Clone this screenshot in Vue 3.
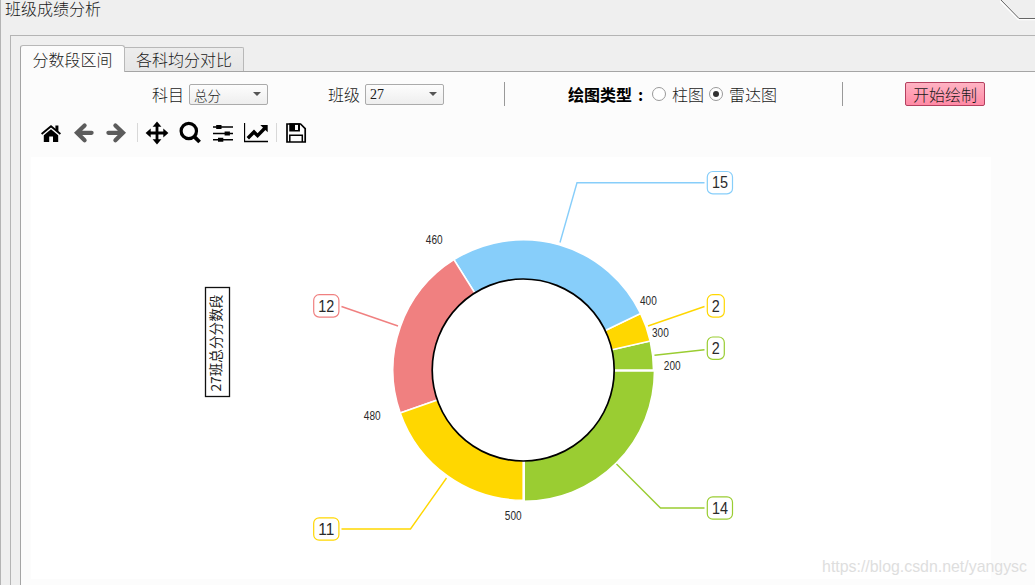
<template>
  <div class="window">
    <svg class="corner" width="35" height="22" viewBox="0 0 35 22">
      <path d="M0 1 L18.5 19.5 H35" stroke="#fff" stroke-width="1.5" fill="none" />
      <path d="M1 0 L19 18.5 H35" stroke="#666" fill="none" />
    </svg>
    <div class="title">班级成绩分析</div>

    <div class="group">
      <div class="tabs">
        <button
          v-for="(tab, i) in tabs"
          :key="tab"
          class="tab"
          :class="{ active: activeTab === i }"
          @click="activeTab = i"
        >{{ tab }}</button>
      </div>

      <div class="pane">
        <div class="controls">
          <label class="subject">科目</label>
          <div class="select zh"><span>总分</span><i class="arrow"></i></div>
          <label class="class-label">班级</label>
          <div class="select"><span>27</span><i class="arrow"></i></div>
          <div class="sep sep-first"></div>
          <strong class="type-label">绘图类型<span class="colon">:</span></strong>
          <span class="radio" @click="chartType = 'bar'"><i :class="{ checked: chartType === 'bar' }"></i>柱图</span>
          <span class="radio" @click="chartType = 'radar'"><i :class="{ checked: chartType === 'radar' }"></i>雷达图</span>
          <div class="sep sep-second"></div>
          <button class="draw">开始绘制</button>
        </div>

        <div class="toolbar">
          <!-- home -->
          <svg width="24" height="24" viewBox="0 0 24 24">
            <path d="M4.8 14.2 L12 8.3 L19.2 14.2 V21 H14 V15.6 H10.2 V21 H4.8 Z" fill="#000" />
            <path d="M2.6 13 L12 5.2 L21.4 13" fill="none" stroke="#000" stroke-width="1.9" />
            <path d="M16.4 4.6 H19.4 V11.4 L16.4 9 Z" fill="#000" />
          </svg>
          <!-- back -->
          <svg class="back" width="24" height="24" viewBox="0 0 24 24">
            <path d="M19.6 11.8 H6 M12.6 4.4 L5 11.8 L12.6 19.2" fill="none" stroke="#5c5c5c" stroke-width="4.2" stroke-linecap="round" />
          </svg>
          <!-- forward -->
          <svg class="forward" width="24" height="24" viewBox="0 0 24 24">
            <path d="M3.4 11.8 H17 M10.4 4.4 L18 11.8 L10.4 19.2" fill="none" stroke="#5c5c5c" stroke-width="4.2" stroke-linecap="round" />
          </svg>
          <i class="bar bar-first"></i>
          <!-- pan -->
          <svg class="pan" width="24" height="24" viewBox="0 0 24 24">
            <path d="M12 4 V20 M4 12 H20" stroke="#000" stroke-width="2.8" />
            <path d="M12 .6 L16.4 5.7 H7.6 Z M12 23.4 L16.4 18.3 H7.6 Z M.6 12 L5.7 7.6 V16.4 Z M23.4 12 L18.3 7.6 V16.4 Z" fill="#000" />
          </svg>
          <!-- zoom -->
          <svg class="zoom" width="24" height="24" viewBox="0 0 24 24">
            <circle cx="10.8" cy="10" r="7.7" fill="none" stroke="#000" stroke-width="3.2" />
            <path d="M16 15.4 L21.6 21" stroke="#000" stroke-width="3.8" />
          </svg>
          <!-- subplots -->
          <svg class="subplots" width="24" height="24" viewBox="0 0 24 24">
            <path d="M2 6 H22 M2 12.5 H22 M2 18.8 H22" stroke="#000" stroke-width="1.4" />
            <path d="M5.2 4 H10.5 V8 H5.2 Z M13.6 10.5 H18.9 V14.5 H13.6 Z M7 16.8 H12.3 V20.8 H7 Z" fill="#000" />
          </svg>
          <!-- axes -->
          <svg class="axes" width="24" height="24" viewBox="0 0 24 24">
            <path d="M.5 2 V20.5 H24" fill="none" stroke="#000" stroke-width="1.3" />
            <path d="M3.8 17.3 L10 11 L13.6 14.6 L21 7" fill="none" stroke="#000" stroke-width="3.4" />
            <path d="M16.3 4 H23.7 V11.3 Z" fill="#000" />
          </svg>
          <i class="bar bar-second"></i>
          <!-- save -->
          <svg class="save" width="24" height="24" viewBox="0 0 24 24">
            <path d="M3 3 H16.6 L21.2 7.6 V21 H3 Z" fill="none" stroke="#000" stroke-width="1.7" />
            <path d="M6 3 H15.2 V9.8 H6 Z M5.8 21 V14.3 H18.3 V21" fill="none" stroke="#000" stroke-width="1.5" />
            <path d="M6 3 H11 V9 H6 Z M14 3 H15.8 V9 H14 Z" fill="#000" />
          </svg>
        </div>

        <svg class="chart" width="960" height="422" viewBox="31 157 960 422">
          <path
            v-for="(s, i) in slices"
            :key="'s' + i"
            :d="s.d"
            :fill="s.color"
            stroke="#fff"
            stroke-width="1.6"
          />
          <circle :cx="cx" :cy="cy" r="91" fill="#fff" stroke="#000" stroke-width="1.7" />

          <g v-for="(c, i) in callouts" :key="'c' + i">
            <polyline :points="c.line" fill="none" :stroke="c.color" stroke-width="1.4" />
            <rect :x="c.x" :y="c.y" :width="c.w" height="22.4" rx="5.5" fill="#fff" :stroke="c.color" stroke-width="1.2" />
            <text
              class="count"
              :x="c.x + c.w / 2"
              :y="c.y + 16.8"
              :textLength="c.text.length * 8"
              lengthAdjust="spacingAndGlyphs"
            >{{ c.text }}</text>
          </g>

          <text
            v-for="l in labels"
            :key="l.text"
            class="score"
            :x="l.x"
            :y="l.y"
            textLength="16.8"
            lengthAdjust="spacingAndGlyphs"
          >{{ l.text }}</text>

          <rect x="205.5" y="287.5" width="24" height="109" fill="#fff" stroke="#111" stroke-width="1.3" />
          <text
            class="y-label"
            transform="translate(221 391.5) rotate(-90)"
            textLength="97"
            lengthAdjust="spacingAndGlyphs"
          >27班总分分数段</text>
        </svg>
      </div>
    </div>

    <div class="watermark">https://blog.csdn.net/yangysc</div>
  </div>
</template>

<script setup>
import { ref } from 'vue';

const tabs = ['分数段区间', '各科均分对比'];
const activeTab = ref(0);
const chartType = ref('radar');

const cx = 523.2;
const cy = 370;
const radius = 130.3;

const green = '#9acd32';
const gold = '#ffd700';
const blue = '#87cefa';
const coral = '#f08080';

const data = [
  { value: 2, color: green },
  { value: 2, color: gold },
  { value: 15, color: blue },
  { value: 12, color: coral },
  { value: 11, color: gold },
  { value: 14, color: green, explode: 1.4 },
];

const total = data.reduce((sum, d) => sum + d.value, 0);
let angle = 0;
// counter-clockwise from the positive x axis
const slices = data.map((d) => {
  const start = angle;
  const end = angle + (d.value / total) * Math.PI * 2;
  angle = end;
  const mid = (start + end) / 2;
  const offset = d.explode || 0;
  const ox = cx + offset * Math.cos(mid);
  const oy = cy - offset * Math.sin(mid);
  const point = (a) => `${ox + radius * Math.cos(a)} ${oy - radius * Math.sin(a)}`;
  return {
    color: d.color,
    d: `M${ox} ${oy} L${point(start)} A${radius} ${radius} 0 0 0 ${point(end)} Z`,
  };
});

const callouts = [
  { text: '15', color: blue, x: 707.3, y: 171.5, w: 25.2, line: '560,242.5 577,182.7 704.5,182.7' },
  { text: '2', color: gold, x: 707.3, y: 294.7, w: 17, line: '648,326 704.5,306.5' },
  { text: '2', color: green, x: 707.3, y: 337, w: 17, line: '654.5,355.2 704.5,349.7' },
  { text: '14', color: green, x: 707.3, y: 496.8, w: 25.2, line: '616.5,464 660.5,508 704.5,508' },
  { text: '11', color: gold, x: 313.7, y: 517.8, w: 25.2, line: '446.5,478 410.5,529 341.5,529' },
  { text: '12', color: coral, x: 313.7, y: 294.7, w: 25.2, line: '398,326 341.5,306.5' },
];

const labels = [
  { text: '460', x: 425.8, y: 244 },
  { text: '400', x: 640, y: 305 },
  { text: '300', x: 652, y: 337 },
  { text: '200', x: 663.8, y: 370 },
  { text: '480', x: 363.8, y: 420 },
  { text: '500', x: 504.8, y: 520 },
];
</script>

<style>
body {
  margin: 0;
  overflow: hidden;
}
</style>

<style scoped>
.window {
  position: relative;
  display: flex;
  flex-direction: column;
  box-sizing: border-box;
  width: 1035px;
  height: 585px;
  overflow: hidden;
  background: #efefef;
  border-left: 1px solid #b4b4b4;
  color: #1a1a1a;
  font-family: "Noto Sans CJK SC", sans-serif;
  font-weight: 300;
  font-size: 16px;
}

.corner {
  position: absolute;
  top: 0;
  right: 0;
}

.title {
  flex: none;
  height: 35px;
  padding-left: 4px;
  line-height: 17px;
}

.group {
  flex: 1;
  min-height: 0;
  margin-left: 9px;
  padding: 9px 0 0 9px;
  border-top: 1px solid #b4b4b4;
  border-left: 1px solid #b4b4b4;
}

.tabs {
  display: flex;
  align-items: flex-end;
  height: 26px;
}

.tab {
  box-sizing: border-box;
  height: 24px;
  padding: 0 11px;
  border: 1px solid #b8b8b8;
  border-left: none;
  border-bottom: none;
  border-radius: 0 2px 0 0;
  background: linear-gradient(#ededed, #e6e6e6);
  color: inherit;
  font: inherit;
  line-height: 23px;
}

.tab.active {
  position: relative;
  height: 27px;
  margin-bottom: -1px;
  width: 105px;
  border-left: 1px solid #a5a5a5;
  border-radius: 3px 3px 0 0;
  background: #fcfcfc;
  line-height: 25px;
}

.pane {
  height: 520px;
  border-top: 1px solid #a5a5a5;
  border-left: 1px solid #a5a5a5;
  background: #fcfcfc;
}

.controls {
  display: flex;
  align-items: center;
  height: 44px;
  padding-left: 131px;
}

.subject {
  margin-right: 5px;
}

.class-label {
  margin-left: 60px;
  margin-right: 5px;
}

.select {
  display: flex;
  align-items: center;
  justify-content: space-between;
  box-sizing: border-box;
  width: 79px;
  height: 21px;
  padding: 1px 6px 0 4px;
  border: 1px solid #ababab;
  border-radius: 2px;
  background: linear-gradient(#fdfdfd, #eee);
  font-family: "Liberation Serif", serif;
  font-size: 14px;
}

.select.zh {
  font-family: "Noto Sans CJK SC", sans-serif;
  font-size: 13.5px;
}

.arrow {
  margin-bottom: 1px;
  border: 4px solid transparent;
  border-top: 4px solid #555;
  border-bottom: none;
}

.sep {
  width: 1px;
  height: 24px;
  background: #999;
}

.sep-first {
  margin-left: 60px;
  margin-right: 63px;
}

.sep-second {
  margin-left: 65px;
  margin-right: 62px;
}

.type-label {
  width: 84px;
  color: #000;
  font-weight: 700;
  white-space: nowrap;
}

.colon {
  margin-left: 6px;
}

.radio {
  display: flex;
  align-items: center;
  margin-right: 5px;
}

.radio + .sep {
  margin-left: 60px;
}

.radio i {
  display: flex;
  box-sizing: border-box;
  width: 14px;
  height: 14px;
  margin-right: 6px;
  border: 1px solid #999;
  border-radius: 50%;
  background: #fff;
}

.radio i.checked::after {
  content: "";
  width: 6px;
  height: 6px;
  margin: auto;
  border-radius: 50%;
  background: #333;
}

.draw {
  box-sizing: border-box;
  width: 80px;
  height: 24px;
  padding: 0;
  border: 1px solid #b4405f;
  border-radius: 2px;
  background: linear-gradient(#ffb3c3, #ff8aa5);
  color: inherit;
  font: inherit;
  line-height: 21px;
}

.toolbar {
  display: flex;
  align-items: center;
  height: 33px;
  padding-left: 18px;
  padding-bottom: 8px;
}

.back {
  margin-left: 9px;
}

.forward {
  margin-left: 9px;
}

.bar {
  width: 1px;
  height: 19px;
  background: #d8d8d8;
}

.bar-first {
  margin-left: 8px;
}

.pan {
  margin-left: 7px;
}

.zoom,
.subplots,
.axes {
  margin-left: 9px;
}

.bar-second {
  margin-left: 8px;
}

.save {
  margin-left: 7px;
}

.chart {
  display: block;
  margin-left: 10px;
  background: #fff;
}

.count {
  font-family: "Liberation Sans", sans-serif;
  font-size: 16px;
  font-weight: 400;
  text-anchor: middle;
  fill: #2a2a2a;
}

.score {
  font-family: "Liberation Sans", sans-serif;
  font-size: 12px;
  font-weight: 400;
  fill: #2a2a2a;
}

.y-label {
  font-family: "Noto Sans CJK SC", sans-serif;
  font-size: 13.5px;
  font-weight: 400;
  fill: #222;
}

.watermark {
  position: absolute;
  right: 8px;
  bottom: 8px;
  color: #dedede;
  font-family: "Liberation Sans", sans-serif;
  font-weight: 400;
  font-size: 15.9px;
  line-height: 20px;
}
</style>
